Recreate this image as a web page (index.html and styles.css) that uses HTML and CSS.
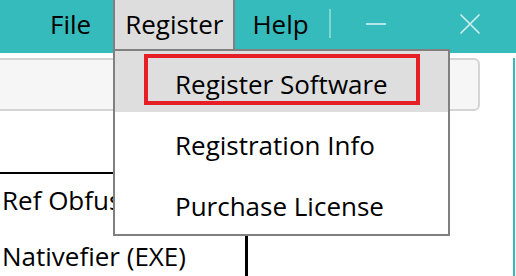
FILE: index.html
```html
<!DOCTYPE html>
<html lang="en">
<head>
    <meta charset="UTF-8">
    <meta name="viewport" content="width=device-width, initial-scale=1.0">
    <title>Register Menu</title>
    <link rel="stylesheet" href="styles.css">
</head>
<body>
    <div class="window">
        <header class="titlebar">
            <nav class="menu">
                <span class="menu-item first">File</span>
                <span class="menu-item active">Register</span>
                <span class="menu-item">Help</span>
            </nav>
            <span class="divider"></span>
            <span class="win-btn minimize">
                <svg width="22" height="4" viewBox="0 0 22 4"><line x1="1" y1="2" x2="21" y2="2" stroke="#d6f1f1" stroke-width="1.6"/></svg>
            </span>
            <span class="win-btn close">
                <svg width="22" height="22" viewBox="0 0 22 22"><path d="M1.5 1.5 L20.5 20.5 M20.5 1.5 L1.5 20.5" stroke="#d6f1f1" stroke-width="1.6" fill="none"/></svg>
            </span>
        </header>

        <main class="content">
            <div class="search"></div>
            <table class="list">
                <tr><td class="name">Ref Obfuscator</td><td></td></tr>
                <tr><td class="name">Nativefier (EXE)</td><td></td></tr>
            </table>
        </main>

        <div class="dropdown">
            <div class="dropdown-item selected">Register Software</div>
            <div class="dropdown-item">Registration Info</div>
            <div class="dropdown-item">Purchase License</div>
            <div class="mark"></div>
        </div>
    </div>
</body>
</html>
```

FILE: styles.css
```css
body {
    margin: 0;
    font-family: 'Open Sans', 'Noto Sans', sans-serif;
    color: #000;
    background-color: #fff;
}
.window {
    position: relative;
    width: 516px;
    height: 276px;
    overflow: hidden;
}
.titlebar {
    height: 53px;
    background-color: #35bbbb;
    display: flex;
    align-items: flex-start;
}
.menu {
    display: flex;
    gap: 5px;
    margin-left: 38px;
}
.menu-item {
    height: 49px;
    line-height: 49px;
    padding: 0 10px;
    font-size: 26px;
    border-left: 2px solid transparent;
    border-right: 2px solid transparent;
}
.menu-item.first {
    padding-right: 15px;
}
.menu-item.active {
    background-color: #dddddd;
    border-color: #808080;
}
.divider {
    width: 2px;
    height: 29px;
    margin: 9px 0 0 8px;
    background-color: #7fd4d4;
}
.win-btn {
    display: flex;
    align-items: center;
    justify-content: center;
    height: 48px;
}
.minimize {
    margin-left: 34px;
}
.close {
    margin-left: 72px;
}
.content {
    height: 223px;
    border-right: 2px solid #35bbbb;
    margin-right: 1px;
}
.search {
    height: 49px;
    margin: 5px 33px 0 -10px;
    border: 2px solid #d4d4d4;
    border-radius: 6px;
    background-color: #f6f6f6;
}
.list {
    width: 440px;
    margin-top: 61px;
    border-collapse: collapse;
    border-top: 2px solid #000;
}
.list td {
    height: 52px;
    padding: 0 0 4px 2px;
    font-size: 26px;
    white-space: nowrap;
}
.list td.name {
    width: 243px;
    border-right: 3px solid #000;
}

/* menu aberto por cima do conteúdo */
.dropdown {
    position: absolute;
    left: 113px;
    top: 49px;
    width: 333px;
    border: 2px solid #808080;
    background-color: #fff;
}
.dropdown-item {
    height: 56px;
    line-height: 56px;
    padding: 5px 0 0 60px;
    font-size: 26px;
}
.dropdown-item.selected {
    background-color: #dedede;
}
.mark {
    position: absolute;
    left: 29px;
    top: 3px;
    width: 268px;
    height: 43px;
    border: 4px solid #e61e25;
}
```
